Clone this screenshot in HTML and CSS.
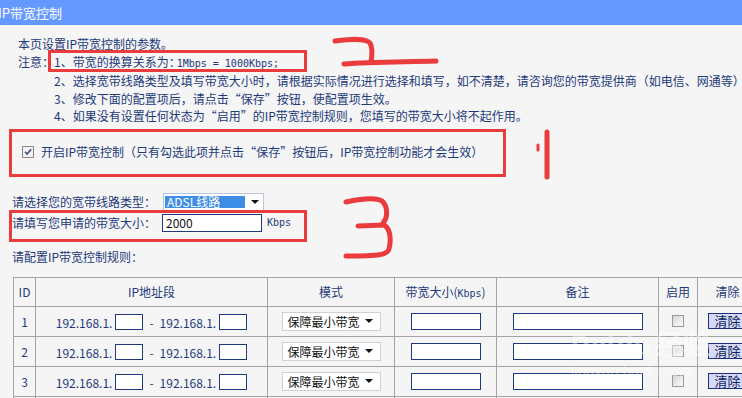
FILE: index.html
```html
<!DOCTYPE html>
<html lang="zh-CN">
<head>
  <meta charset="UTF-8">
  <title>IP带宽控制</title>
  <link rel="stylesheet" href="styles.css">
</head>
<body>
<div class="page">

  <div class="titlebar"><span class="title">IP带宽控制</span></div>

  <div class="content">
    <div class="intro">本页设置IP带宽控制的参数。</div>
    <div class="notes">
      <div class="notes-label">注意：</div>
      <div class="notes-list">
        <div>1、带宽的换算关系为：<span class="mono">1Mbps = 1000Kbps;</span></div>
        <div>2、选择宽带线路类型及填写带宽大小时，请根据实际情况进行选择和填写，如不清楚，请咨询您的带宽提供商（如电信、网通等）。</div>
        <div>3、修改下面的配置项后，请点击<span class="ql">“</span>保存<span class="qr">”</span>按钮，使配置项生效。</div>
        <div>4、如果没有设置任何状态为<span class="ql">“</span>启用<span class="qr">”</span>的IP带宽控制规则，您填写的带宽大小将不起作用。</div>
      </div>
    </div>

    <div class="enable-row">
      <span class="chk">
        <svg width="12" height="12" viewBox="0 0 12 12">
          <rect x="0.5" y="0.5" width="11" height="11" fill="#eaeaea" stroke="#8c8c8c"/>
          <rect x="1.5" y="1.5" width="9" height="9" fill="#f6f6f6"/>
          <path d="M3 5.8 L5 8 L9.2 3.4" fill="none" stroke="#3e4f82" stroke-width="1.6"/>
        </svg>
      </span>
      <span>开启IP带宽控制（只有勾选此项并点击<span class="ql">“</span>保存<span class="qr">”</span>按钮后，IP带宽控制功能才会生效）</span>
    </div>

    <div class="form-row first">
      <span class="form-label">请选择您的宽带线路类型：</span>
      <div class="line-select">
        <span class="line-value">ADSL线路</span>
        <span class="arrow"></span>
      </div>
    </div>
    <div class="form-row">
      <span class="form-label">请填写您申请的带宽大小：</span>
      <div class="bw-input">2000</div>
      <span class="unit mono">Kbps</span>
    </div>
    <div class="rules-title">请配置IP带宽控制规则：</div>

    <table class="rules">
      <colgroup>
        <col class="c-id"><col class="c-ip"><col class="c-mode"><col class="c-bw"><col class="c-note"><col class="c-on"><col class="c-clr">
      </colgroup>
      <tr class="head">
        <th>ID</th><th>IP地址段</th><th>模式</th><th>带宽大小(<span class="mono">Kbps</span>)</th><th>备注</th><th>启用</th><th>清除</th>
      </tr>
      <tr>
        <td>1</td>
        <td><span class="ip">192.168.1.</span><span class="ip-box"></span><span class="dash">-</span><span class="ip">192.168.1.</span><span class="ip-box"></span></td>
        <td><div class="mode-select">保障最小带宽<span class="arrow"></span></div></td>
        <td><span class="bw-box"></span></td>
        <td><span class="note-box"></span></td>
        <td><span class="box"></span></td>
        <td><button class="clear">清除</button></td>
      </tr>
      <tr>
        <td>2</td>
        <td><span class="ip">192.168.1.</span><span class="ip-box"></span><span class="dash">-</span><span class="ip">192.168.1.</span><span class="ip-box"></span></td>
        <td><div class="mode-select">保障最小带宽<span class="arrow"></span></div></td>
        <td><span class="bw-box"></span></td>
        <td><span class="note-box"></span></td>
        <td><span class="box"></span></td>
        <td><button class="clear">清除</button></td>
      </tr>
      <tr>
        <td>3</td>
        <td><span class="ip">192.168.1.</span><span class="ip-box"></span><span class="dash">-</span><span class="ip">192.168.1.</span><span class="ip-box"></span></td>
        <td><div class="mode-select">保障最小带宽<span class="arrow"></span></div></td>
        <td><span class="bw-box"></span></td>
        <td><span class="note-box"></span></td>
        <td><span class="box"></span></td>
        <td><button class="clear">清除</button></td>
      </tr>
      <tr>
        <td>4</td>
        <td><span class="ip">192.168.1.</span><span class="ip-box"></span><span class="dash">-</span><span class="ip">192.168.1.</span><span class="ip-box"></span></td>
        <td><div class="mode-select">保障最小带宽<span class="arrow"></span></div></td>
        <td><span class="bw-box"></span></td>
        <td><span class="note-box"></span></td>
        <td><span class="box"></span></td>
        <td><button class="clear">清除</button></td>
      </tr>
    </table>
  </div>

  <!-- hand-drawn marks on top of the screenshot -->
  <div class="mark-box mark-note"></div>
  <div class="mark-box mark-enable"></div>
  <div class="mark-box mark-size"></div>
  <svg class="marks" width="742" height="398" viewBox="0 0 742 398">
    <g fill="none" stroke="#ea3b3d" stroke-width="5" stroke-linecap="round" stroke-linejoin="round">
      <path d="M335 41 C352 39 366 38 370 43 C373 48 372 56 371 62"/>
      <path d="M344 64 C370 62 405 62 436 61"/>
      <path d="M547 132 L547 177"/>
      <path d="M538 145 L538 150" stroke-width="3"/>
      <path d="M346 202 C360 199 376 197 382 201 C388 206 388 218 383 223"/>
      <path d="M358 226 L384 225 C391 229 391 241 389 249 C387 255 380 256 346 256"/>
    </g>
  </svg>

  <div class="watermark">
    <div class="wm-big">Bai<span class="wm-du">du</span>经验</div>
    <div class="wm-small">jingyan.baidu.com</div>
  </div>
</div>
</body>
</html>
```

FILE: styles.css
```css
body {
  margin: 0;
  background: #f5f5f5;
  font-family: "Noto Sans CJK SC", sans-serif;
  font-size: 12px;
  color: #1e3a7b;
  overflow: hidden;
  text-spacing-trim: space-all;
}
.page {
  position: relative;
  width: 742px;
  height: 398px;
  overflow: hidden;
}
.titlebar {
  height: 25px;
  background: #6699ff;
  color: #fff;
  font-size: 13px;
  line-height: 25px;
}
.titlebar .title {
  display: inline-block;
  margin-left: -2px;
}
.content {
  padding-left: 12px;
}
.mono {
  font-family: "DejaVu Sans Mono", monospace;
  font-size: 10px;
}
.notes-list .mono {
  margin-left: -4px;
}
.ql, .qr {
  display: inline-block;
  width: 12px;
}
.ql {
  text-align: right;
}
.qr {
  text-align: left;
}
.intro {
  margin-top: 10px;
  padding-left: 6px;
  line-height: 17.5px;
}
.notes {
  display: flex;
  padding-left: 6px;
  line-height: 17.5px;
  white-space: nowrap;
}
.notes-label {
  flex: none;
  width: 36px;
}
.enable-row {
  display: flex;
  align-items: center;
  gap: 7px;
  margin-top: 18px;
  padding-left: 10px;
  line-height: 18px;
  white-space: nowrap;
}
.chk {
  display: flex;
}
.form-row {
  display: flex;
  align-items: center;
  height: 20px;
  margin-top: 1px;
}
.form-row.first {
  margin-top: 31px;
}
.form-label {
  width: 150px;
}
.line-select {
  display: flex;
  align-items: center;
  width: 99px;
  height: 16px;
  margin-left: 1px;
  border: 1px solid #b9c6dc;
  background: #fff;
}
.line-value {
  margin-left: 1px;
  width: 78px;
  height: 12px;
  line-height: 12px;
  background: #3f8ee6;
  color: #fff;
  font-size: 12px;
  padding-left: 2px;
}
.line-select .arrow {
  margin-left: 6px;
}
.arrow {
  width: 0;
  height: 0;
  border-left: 4px solid transparent;
  border-right: 4px solid transparent;
  border-top: 4px solid #111;
}
.bw-input {
  box-sizing: border-box;
  width: 100px;
  height: 18px;
  border: 1px solid #1f3a80;
  background: #fff;
  color: #111;
  padding-left: 3px;
  line-height: 16px;
}
.unit {
  margin-left: 5px;
  color: #1e3a7b;
}
.rules-title {
  margin-top: 15px;
  line-height: 18px;
}
.rules {
  table-layout: fixed;
  width: 744px;
  margin-top: 11px;
  margin-left: 1px;
  border-collapse: collapse;
}
.c-id { width: 22px; }
.c-ip { width: 232px; }
.c-mode { width: 127px; }
.c-bw { width: 102px; }
.c-note { width: 162px; }
.c-on { width: 39px; }
.c-clr { width: 60px; }
.rules th, .rules td {
  border: 1px solid #a4a4a4;
  padding: 0;
  text-align: center;
  vertical-align: middle;
  font-weight: normal;
  white-space: nowrap;
}
.rules tr.head {
  height: 29px;
}
.rules tr {
  height: 30px;
}
.ip {
  display: inline-block;
  vertical-align: middle;
}
.ip-box {
  display: inline-block;
  vertical-align: middle;
  box-sizing: border-box;
  width: 28px;
  height: 16px;
  margin-left: 3px;
  border: 1px solid #1f3a80;
  background: #fff;
}
.dash {
  display: inline-block;
  vertical-align: middle;
  margin: 0 6px;
}
.mode-select {
  box-sizing: border-box;
  display: flex;
  align-items: center;
  justify-content: space-between;
  width: 99px;
  height: 19px;
  margin: 0 auto;
  padding: 0 7px 0 5px;
  border: 1px solid #d0d0d0;
  background: #fff;
  color: #111;
}
.bw-box, .note-box {
  display: block;
  box-sizing: border-box;
  height: 17px;
  margin: 0 auto;
  border: 1px solid #1f3a80;
  background: #fff;
}
.bw-box { width: 70px; }
.note-box { width: 130px; }
.box {
  display: block;
  box-sizing: border-box;
  width: 12px;
  height: 12px;
  margin: 0 auto;
  border: 1px solid #9a9a9a;
  background: linear-gradient(135deg, #d6d6d6, #fbfbfb);
}
.clear {
  display: block;
  box-sizing: border-box;
  width: 40px;
  height: 16px;
  margin: 0 auto;
  padding: 0;
  border: 1px solid #1f2f80;
  background: #d6daf8;
  color: #0e1f5c;
  font-family: "Noto Sans CJK SC", sans-serif;
  font-size: 13px;
  line-height: 14px;
}

/* annotations */
.mark-box {
  position: absolute;
  border: 3px solid #ea3b3d;
}
.mark-note {
  left: 48px;
  top: 50px;
  width: 253px;
  height: 16px;
}
.mark-enable {
  left: 9px;
  top: 129px;
  width: 491px;
  height: 42px;
}
.mark-size {
  left: 9px;
  top: 210px;
  width: 292px;
  height: 26px;
}
.marks {
  position: absolute;
  left: 0;
  top: 0;
}
.watermark {
  position: absolute;
  left: 571px;
  top: 330px;
  color: rgba(255, 255, 255, 0.45);
  font-family: "Liberation Sans", "Noto Sans CJK SC", sans-serif;
  pointer-events: none;
}
.wm-big {
  font-size: 28px;
  font-weight: bold;
  line-height: 32px;
}
.wm-du {
  margin: 0 4px 0 2px;
}
.wm-small {
  font-size: 15px;
  line-height: 18px;
}
```
